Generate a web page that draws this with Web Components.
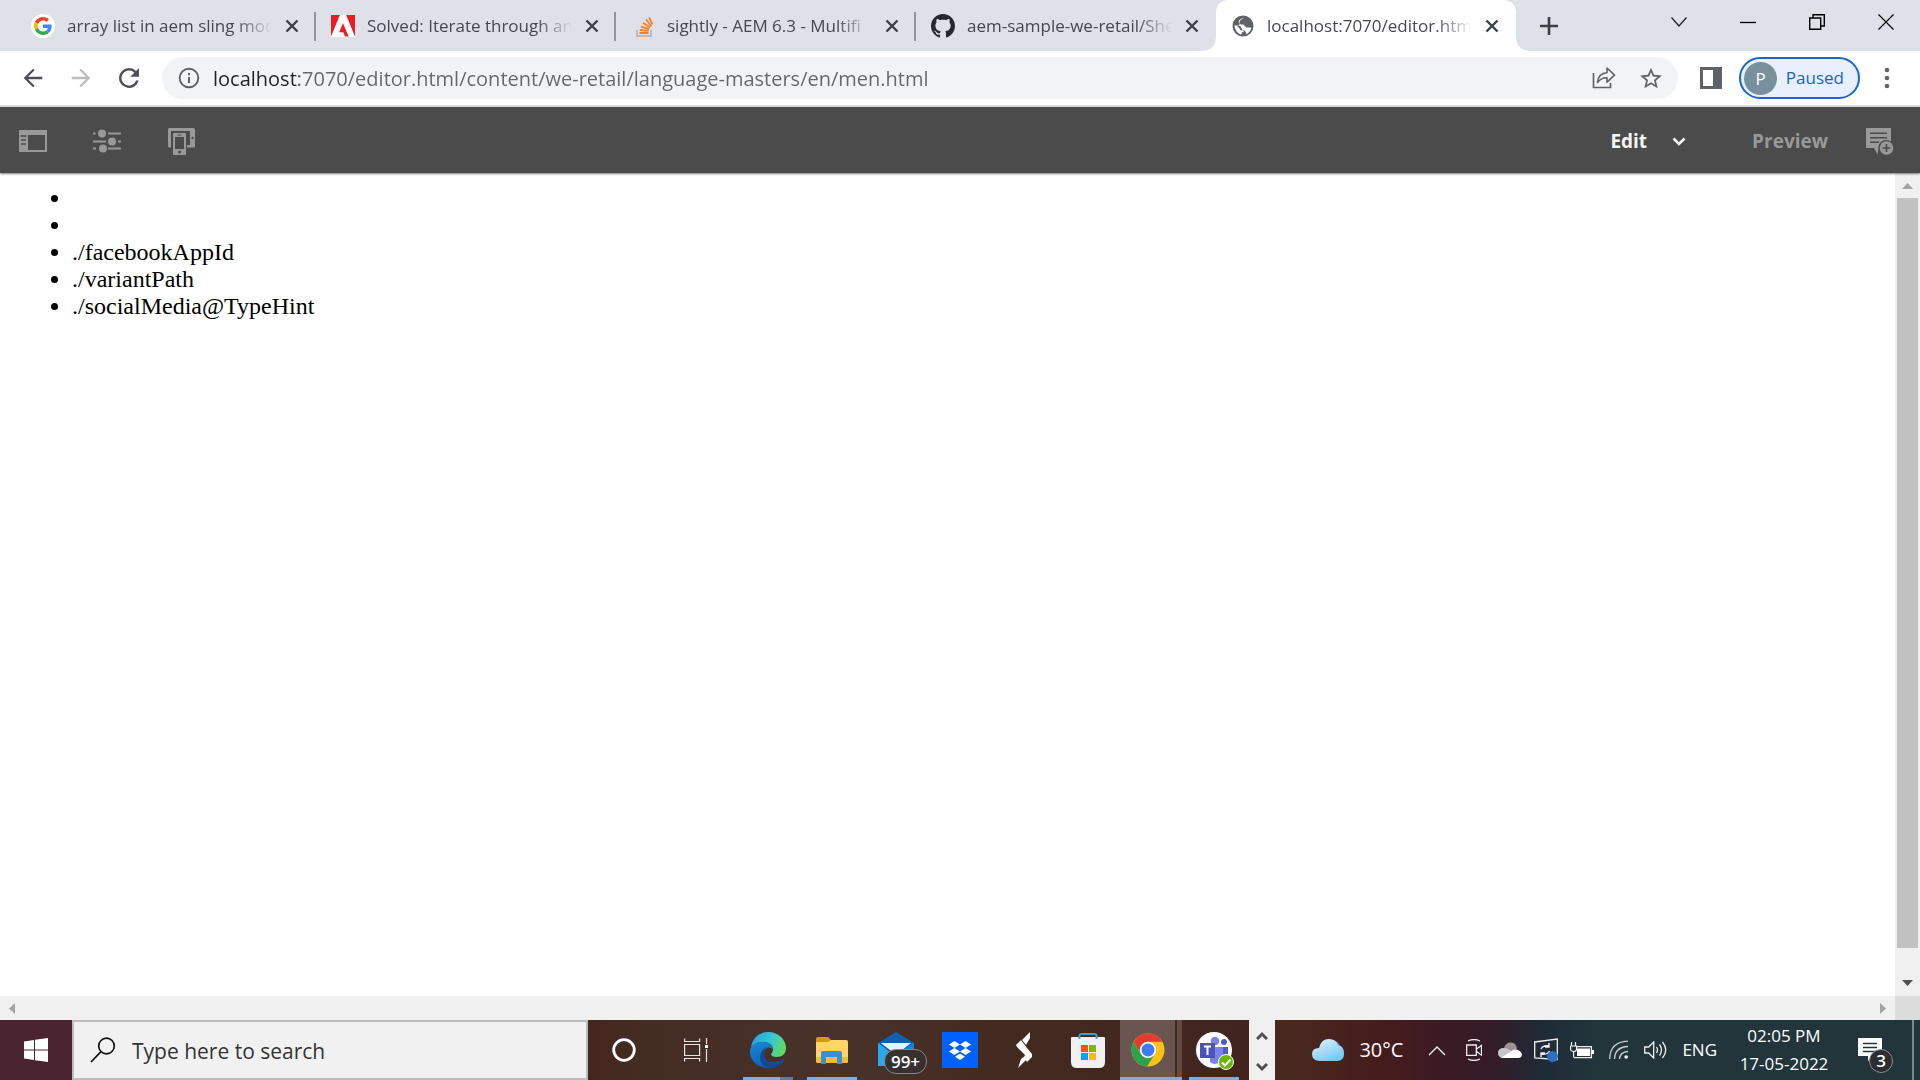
<!DOCTYPE html>
<html lang="en">
<head>
<meta charset="utf-8">
<title>localhost:7070/editor.html</title>
<style>
  html, body {
    height: 100%;
    margin: 0;
    overflow: hidden;
  }

  body {
    font-family: "Open Sans", "Noto Sans", sans-serif;
    background: #fff;
  }
</style>
</head>
<body>
<desktop-screen></desktop-screen>

<script>
// width, height, svg content
const ICONS = {
  google: [24, 24, `<circle cx="12" cy="12" r="12" fill="#fff"/><g transform="translate(3 3) scale(.375)">
    <path fill="#EA4335" d="M24 9.5c3.54 0 6.71 1.22 9.21 3.6l6.85-6.85C35.9 2.38 30.47 0 24 0 14.62 0 6.51 5.38 2.56 13.22l7.98 6.19C12.43 13.72 17.74 9.5 24 9.5z"/>
    <path fill="#4285F4" d="M46.98 24.55c0-1.57-.15-3.09-.38-4.55H24v9.02h12.94c-.58 2.96-2.26 5.48-4.78 7.18l7.73 6c4.51-4.18 7.09-10.36 7.09-17.65z"/>
    <path fill="#FBBC05" d="M10.53 28.59a14.5 14.5 0 010-9.18l-7.98-6.19a24 24 0 000 21.56l7.98-6.19z"/>
    <path fill="#34A853" d="M24 48c6.48 0 11.93-2.13 15.89-5.81l-7.73-6c-2.15 1.45-4.92 2.3-8.16 2.3-6.26 0-11.57-4.22-13.47-9.91l-7.98 6.19C6.51 42.62 14.62 48 24 48z"/></g>`],
  adobe: [24, 24, `<path fill="#fff" d="M0 1h24v22H0z"/><path fill="#ec1c24" d="M14 22.6l-1.7-4.3H8.1L12 9.2l5.7 13.4zM8.9 1H0v21.6zM24 1h-8.9L24 22.6z"/>`],
  stack: [24, 24, `<g transform="translate(2 0)"><path d="M4 16v6h14v-6" fill="none" stroke="#bcbbbb" stroke-width="2"/>
    <path d="M6.5 19h9M6.8 16l8.8.9M7.9 12.6l8.3 2.6M10 8.7l7.1 4.9M13 5.3l5.4 6.9M16.2 3.3l3.2 7" stroke="#f48024" stroke-width="1.8"/></g>`],
  github: [24, 24, `<path fill="#24292f" transform="scale(1.5)" d="M8 0C3.58 0 0 3.58 0 8c0 3.54 2.29 6.53 5.47 7.59.4.07.55-.17.55-.38 0-.19-.01-.82-.01-1.49-2.01.37-2.53-.49-2.69-.94-.09-.23-.48-.94-.82-1.13-.28-.15-.68-.52-.01-.53.63-.01 1.08.58 1.23.82.72 1.21 1.87.87 2.33.66.07-.52.28-.87.51-1.07-1.78-.2-3.64-.89-3.64-3.95 0-.87.31-1.59.82-2.15-.08-.2-.36-1.02.08-2.12 0 0 .67-.21 2.2.82.64-.18 1.32-.27 2-.27s1.36.09 2 .27c1.53-1.04 2.2-.82 2.2-.82.44 1.1.16 1.92.08 2.12.51.56.82 1.27.82 2.15 0 3.07-1.87 3.75-3.65 3.95.29.25.54.73.54 1.48 0 1.07-.01 1.93-.01 2.2 0 .21.15.46.55.38A8.013 8.013 0 0016 8c0-4.42-3.58-8-8-8z"/>`],
  globe: [24, 24, `<circle cx="12" cy="12" r="10.5" fill="#5f6368"/><path fill="#fff" d="M13 3.500c-1 1.500-4 2-4.500 4.500-.2 2 1 2.500 3 2.500 2.500 0 2 3 4.500 3h4.300c-.2 3-2.300 5.700-5.300 6.800.3-3-1-3.800-3.500-4-1.500-3.500-2-4.800-5-4.800H3.500c.1 4.800 3.500 8.500 7 9l.5-2.500 2 .2c-.5-2-2-2-4-2.200.3-2-2-2.500-3-4 2 0 2.500-.5 2.500-2.500-1.500-2-1.500-3.500 4.500-6z"/>`],
  close: [14, 14, `<path d="M1.500 1.500l11 11M12.500 1.500l-11 11" stroke="#3c4043" stroke-width="2.400"/>`],
  plus: [18, 18, `<path d="M9 0v18M0 9h18" stroke="#3c4043" stroke-width="2.600"/>`],
  caret: [18, 12, `<path d="M1.500 1.500L9 10l7.500-8.500" fill="none" stroke="#222" stroke-width="1.300"/>`],
  minimize: [16, 16, `<path d="M0 8.500h16" stroke="#000" stroke-width="1.300"/>`],
  restore: [16, 16, `<path d="M.7 4h11v11.300H.7zM4 4V.7h11.300V12h-3.600" fill="none" stroke="#000" stroke-width="1.400"/>`],
  quit: [16, 16, `<path d="M.5.5l15 15M15.500.5l-15 15" stroke="#000" stroke-width="1.200"/>`],
  back: [28, 28, `<path transform="scale(1.167)" fill="#4d5156" d="M20 11H7.800l5.600-5.600L12 4l-8 8 8 8 1.400-1.400L7.800 13H20z"/>`],
  forward: [28, 28, `<path transform="scale(1.167)" fill="#bbbdc0" d="M4 11h12.200l-5.600-5.600L12 4l8 8-8 8-1.400-1.400 5.600-5.600H4z"/>`],
  reload: [30, 30, `<path transform="scale(1.25)" fill="#4d5156" d="M17.650 6.350A7.960 7.960 0 0012 4a8 8 0 107.730 10h-2.080A6 6 0 1112 6c1.660 0 3.140.69 4.220 1.780L13 11h7V4z"/>`],
  info: [22, 22, `<circle cx="11" cy="11" r="9.300" fill="none" stroke="#5f6368" stroke-width="1.900"/><path d="M11 10v6M11 6v2.200" stroke="#5f6368" stroke-width="2"/>`],
  share: [24, 24, `<path d="M1.500 7v14.500h17V17" fill="none" stroke="#5f6368" stroke-width="1.700"/><path d="M5.500 16.500c.5-6 3.500-9.500 9.500-9.800V2l7.500 7.200-7.500 7v-4.500c-4.500 0-7 1.300-9.500 4.800z" fill="none" stroke="#5f6368" stroke-width="1.600" stroke-linejoin="round"/>`],
  star: [24, 24, `<path transform="translate(-1 -.5) scale(1.083)" fill="#5f6368" d="M22 9.240l-7.190-.62L12 2 9.190 8.630 2 9.240l5.460 4.730L5.820 21 12 17.270 18.180 21l-1.630-7.030zM12 15.400l-3.760 2.270 1-4.280-3.320-2.880 4.380-.38L12 6.100l1.710 4.040 4.380.38-3.320 2.880 1 4.280z"/>`],
  panel: [22, 22, `<path fill="#5f6368" fill-rule="evenodd" d="M0 0h22v22H0zM3 3v16h10V3z"/>`],
  dots: [6, 22, `<g fill="#5f6368"><circle cx="3" cy="3" r="2.300"/><circle cx="3" cy="11" r="2.300"/><circle cx="3" cy="19" r="2.300"/></g>`],
  rail: [28, 22, `<path fill="#999" fill-rule="evenodd" d="M0 0h28v22H0zM9 5v15h17V5zM1.500 5.200v1.500h6V5.200zM2 9.200v1.500h5V9.200zM2 13.200v1.500h5v-1.500z"/>`],
  sliders: [28, 24, `<g stroke="#999" stroke-width="2"><path d="M0 4.500h2.500M15 4.500h13M0 12.500h13M25 12.500h3M0 19.500h3M15 19.500h13"/></g><g fill="#999"><circle cx="9" cy="4.500" r="4"/><circle cx="19" cy="12.500" r="4"/><circle cx="10" cy="19.500" r="4"/></g>`],
  devices: [27, 27, `<path fill="#999" fill-rule="evenodd" d="M1.500 0h24q1.500 0 1.500 1.500V18q0 1.500-1.500 1.500H19V17h3V3H3v16.500H1.500Q0 19.500 0 18V1.500Q0 0 1.500 0z"/><circle cx="24.500" cy="10" r="1.200" fill="#4b4b4b"/><path fill="#999" fill-rule="evenodd" d="M6 5h11q1 0 1 1v20q0 1-1 1H6q-1 0-1-1V6q0-1 1-1zM7 9v12h9V9zM9.500 6.500v1h4v-1zM11.500 22.500a1.300 1.300 0 100 3 1.300 1.300 0 000-3z"/>`],
  chevron: [14, 9, `<path d="M1.500 1.500L7 7l5.500-5.500" fill="none" stroke="#f5f5f5" stroke-width="2.600"/>`],
  annotate: [28, 28, `<path fill="#999" fill-rule="evenodd" d="M0 1h25v13.500a8 8 0 00-12.500 8l-1 5L8 21H0zM4 5.500V7h17V5.500zM4 10v1.500h17V10zM4 14.500V16h9v-1.500z"/><circle cx="20.500" cy="21" r="6.800" fill="#999"/><path d="M20.500 17v8M16.500 21h8" stroke="#4b4b4b" stroke-width="1.600"/>`],
  windows: [24, 24, `<path fill="#fff" d="M0 3.400l10-1.400v9.500H0zM11 1.800L24 0v11.500H11zM0 12.500h10V22L0 20.600zM11 12.500h13V24l-13-1.800z"/>`],
  search: [26, 26, `<circle cx="16.500" cy="9" r="7.800" fill="none" stroke="#111" stroke-width="1.700"/><path d="M11 14.700L1 25" stroke="#111" stroke-width="1.700"/>`],
  cortana: [24, 24, `<circle cx="12" cy="12" r="10.300" fill="none" stroke="#fff" stroke-width="2.800"/>`],
  taskview: [24, 24, `<g fill="none" stroke="#e8e4e2" stroke-width="1.200"><path d="M.6.5v3h15v-3M.6 6.500h15v11H.6zM.6 23.500v-3h15v3M22.500 0v6M22.500 11v13"/></g><path d="M21 7h3v3h-3z" fill="#fff"/>`],
  edge: [36, 36, `<defs><linearGradient id="a" x1="0" x2="1" y1=".2" y2=".5"><stop stop-color="#2b9be0"/><stop offset=".55" stop-color="#35c7d4"/><stop offset="1" stop-color="#62dc5b"/></linearGradient><linearGradient id="b" y2="1" x2=".5"><stop stop-color="#178bd8"/><stop offset="1" stop-color="#0f5cb5"/></linearGradient></defs>
    <path fill="url(#a)" d="M1 16C2 6 9 0 18 0c11 0 18 8 18 16 0 6-4 9-9 9-4 0-6-1.500-6-2.500s2-2 2-5.500c0-4-4-7-10-7-5 0-10 2-12 6z"/>
    <path fill="url(#b)" d="M0 20c0-6 5-10 12-10 7 0 11 3.500 11 7.500-3-4-9-2-9 4.500 0 7 6 9.500 12 8 4-.8 6-2.500 7-2.500 1 0 1 1 .5 1.700C30 33.500 24.500 36 18 36 8 36 0 28.500 0 20z"/>
    <path fill="#114a94" d="M17 15c-5 2-8 7-6.500 13 1.200 5 5 8 9.500 8 6 0 11-3 13.500-6.800.5-.7.5-1.700-.5-1.700-1 0-3 1.700-7 2.500-6 1.500-12-1-12-8 0-3.500 1-5.500 3-7z"/>`],
  explorer: [32, 27, `<path fill="#d99a08" d="M0 2q0-2 2-2h10l3 3v5H0z"/><path fill="#ffd667" d="M0 5h12l3-2h15q2 0 2 2v19q0 2-2 2H2q-2 0-2-2z"/><path fill="#f3bd38" d="M0 20h32v4q0 2-2 2H2q-2 0-2-2z"/><path fill="#3c8fd6" d="M5 27V16q0-2 2-2h17q2 0 2 2v11h-5v-7H10v7z"/>`],
  mail: [36, 36, `<path fill="#0f61b0" d="M0 11L18 0l18 11v6H0z"/><path fill="#2aa8ea" d="M0 11l18 13 18-13v23H0z"/><path fill="#e9f2fa" d="M3 11h30L18 23z"/><path fill="#1b82d1" d="M36 11v23L14 20l4 3z"/>`],
  dropbox: [36, 36, `<path fill="#0061fe" d="M0 0h36v36H0z"/><path fill="#fff" d="M12.500 9L18 12.500 12.500 16 7 12.500zM23.500 9L29 12.500 23.500 16 18 12.500zM12.500 16L18 19.500 12.500 23 7 19.500zM23.500 16L29 19.500 23.500 23 18 19.500zM18 21.500l5 3.200-5 3.300-5-3.300z"/>`],
  spark: [18, 36, `<path fill="#fff" d="M15 0v6l-4 7-4-5zM1 13l5-5 6 8 5 6v3l-5 5-3-5 1-2-8-8zM3 36l3-9 4-3 1 4z"/>`],
  store: [36, 36, `<path fill="#f1f1f1" d="M1 6q0-1 1-1h32q1 0 1 1v24q0 6-6 6H7q-6 0-6-6z"/><path fill="#f05022" d="M11 13h7v7h-7z"/><path fill="#7eb900" d="M19 13h7v7h-7z"/><path fill="#00a3ee" d="M11 21h7v7h-7z"/><path fill="#ffb800" d="M19 21h7v7h-7z"/><path d="M9.500 7V4q0-2 2-2h13q2 0 2 2v3" fill="none" stroke="#35a3cf" stroke-width="2"/>`],
  chrome: [34, 34, `<circle cx="17" cy="17" r="16.500" fill="#fbc116"/><path fill="#e33b2e" d="M2.700 8.800A16.500 16.500 0 0131.300 8.800H17L10 21z"/><path fill="#2ba24c" d="M2.700 8.800L10 21.200 17 25.300 24 21 16 33.500A16.500 16.500 0 012.700 8.800z"/><circle cx="17" cy="17" r="8.200" fill="#fff"/><circle cx="17" cy="17" r="6.500" fill="#3b7ded"/>`],
  teams: [36, 36, `<circle cx="18" cy="18" r="18" fill="#fff"/><circle cx="28" cy="10" r="3" fill="#5059c9"/><path fill="#5059c9" d="M25 15h7v9q0 4-4 4h-3z"/><circle cx="19" cy="9" r="4.300" fill="#7b83eb"/><path fill="#7b83eb" d="M14 15h13v10a8 8 0 01-13 5z"/><path fill="#4b53bc" d="M4 11h15v15H4z"/><path d="M8 14.500h7M11.500 14.500V23" stroke="#fff" stroke-width="2"/>`],
  presence: [16, 16, `<circle cx="8" cy="8" r="7.500" fill="#6bb700" stroke="#fff"/><path d="M4 8.500l3 3 5.500-6" fill="none" stroke="#fff" stroke-width="2"/>`],
  bandUp: [12, 9, `<path d="M1 8l5-5 5 5" fill="none" stroke="#505050" stroke-width="3"/>`],
  bandDown: [12, 9, `<path d="M1 1l5 5 5-5" fill="none" stroke="#505050" stroke-width="3"/>`],
  weather: [32, 23, `<defs><linearGradient id="a" x2=".6" y2="1"><stop stop-color="#e5f6fe"/><stop offset="1" stop-color="#79c6f2"/></linearGradient></defs><path fill="#3b85c9" d="M18 3q8-3 10 4 4 2 4 7l-6 4z"/><path fill="url(#a)" d="M7 9Q9 0 17 0q7 0 9 6 6 1 6 9 0 7-7 7H8q-8 0-8-7 0-6 7-6z"/>`],
  trayUp: [18, 11, `<path d="M1 10l8-8 8 8" fill="none" stroke="#eee" stroke-width="1.400"/>`],
  meet: [16, 22, `<g fill="none" stroke="#eee" stroke-width="1.300"><path d="M.7 6h9.600v10.300H.7zM10.500 10l5-3.500v9.500l-5-3.500M2 2q6-3 12 0M2 20q6 3 12 0"/></g>`],
  onedrive: [24, 17, `<path fill="#9b9296" d="M6 6q2-6 7-5.500 5 0 6 6l-7 7-9-3z"/><path fill="#c9c5c8" d="M4 16q-4-1-4-5 0-5 6-5 4 0 8 4l-9 6z"/><path fill="#fff" d="M3 16l12-8q6-2 9 4 0 4-4 4z"/>`],
  sync: [24, 24, `<path d="M.7 4L23.300 1v20.500L.7 20z" fill="none" stroke="#eee" stroke-width="1.300"/><path d="M7 11q2-4 8-3M15 5v4h-4M15.500 13q-2 4-8 3M7 19v-4h4" fill="none" stroke="#eee" stroke-width="1.400"/><circle cx="18.500" cy="18.500" r="5.500" fill="#2a72c4"/>`],
  battery: [24, 17, `<path d="M7 4.600h14.400v11H4" fill="none" stroke="#eee" stroke-width="1.300"/><path fill="#fff" d="M7 6.500h13v7.500H7zM22 8h2v4h-2z"/><path d="M1.500 0v4M5.500 0v4M.6 4h6v3q0 2.500-3 2.500T.6 7zM3.600 10v5.600" fill="none" stroke="#eee" stroke-width="1.200"/>`],
  wifi: [20, 20, `<g fill="none" stroke="#c8cecf" stroke-width="1.300"><path d="M.7 19Q1 2 19 1.200M5.500 19Q6 7 19 6.500M10.500 19q.5-7 8.500-7.500"/></g><circle cx="17.200" cy="17" r="1.800" fill="#fff"/>`],
  volume: [23, 18, `<g fill="none" stroke="#eee" stroke-width="1.300"><path d="M.7 6h4l5-5v16l-5-5h-4zM12.500 6q2 3 0 6M15.500 3.500q4 5.500 0 11M18.500 1q6.500 8 0 16"/></g>`],
  action: [24, 24, `<path fill="#fff" d="M0 0h24v18h-9l-5 5v-5H0z"/><path d="M5 5.500h14M5 9.500h14M5 13.500h14" stroke="#21353a" stroke-width="1.300"/>`],
  up: [11, 6, `<path fill="#a3a3a3" d="M0 6l5.500-6L11 6z"/>`],
  down: [11, 6, `<path fill="#505050" d="M0 0h11L5.500 6z"/>`],
  left: [6, 11, `<path fill="#a3a3a3" d="M6 0v11L0 5.500z"/>`],
  right: [6, 11, `<path fill="#a3a3a3" d="M0 0v11l6-5.500z"/>`]
};

const BUTTON_RESET = `
  button {
    display: grid;
    place-content: center;
    margin: 0;
    padding: 0;
    border: none;
    background: none;
    color: inherit;
    font: inherit;
  }
`;

class SvgIcon extends HTMLElement {
  static observedAttributes = ['name'];

  constructor() {
    super();
    this.attachShadow({ mode: 'open' });
  }

  attributeChangedCallback() {
    const [width, height, content] = ICONS[this.getAttribute('name')];
    this.shadowRoot.innerHTML = `
      <style>
        :host { display: block; flex: none; }
        svg { display: block; }
      </style>
      <svg width="${width}" height="${height}" viewBox="0 0 ${width} ${height}" aria-hidden="true">${content}</svg>
    `;
  }
}

class BrowserTab extends HTMLElement {
  constructor() {
    super();
    this.attachShadow({ mode: 'open' });
    this.shadowRoot.innerHTML = `
      <style>
        ${BUTTON_RESET}
        :host {
          display: flex;
          align-items: center;
          flex: 0 1 300px;
          box-sizing: border-box;
          min-width: 0;
          height: 51px;
          padding: 0 16px 0 15px;
          gap: 12px;
          position: relative;
          font-size: 17px;
          line-height: 24px;
          color: #45494d;
        }
        :host([divided])::after {
          content: "";
          position: absolute;
          right: 0;
          top: 12px;
          width: 2px;
          height: 29px;
          background: #919499;
        }
        :host([active]) {
          background: #fff;
          border-radius: 12px 12px 0 0;
        }
        /* flared feet of the active tab */
        :host([active])::before, :host([active])::after {
          content: "";
          position: absolute;
          bottom: 0;
          width: 12px;
          height: 12px;
        }
        :host([active])::before {
          right: 100%;
          background: radial-gradient(circle at 0 0, transparent 11px, #fff 12px);
        }
        :host([active])::after {
          left: 100%;
          background: radial-gradient(circle at 100% 0, transparent 11px, #fff 12px);
        }
        .title {
          flex: 1;
          overflow: hidden;
          white-space: nowrap;
          -webkit-mask-image: linear-gradient(to left, transparent, #000 36px);
          mask-image: linear-gradient(to left, transparent, #000 36px);
        }
        .close { width: 16px; height: 24px; }
      </style>
      <svg-icon></svg-icon>
      <span class="title"><slot></slot></span>
      <button class="close" aria-label="Close tab"><svg-icon name="close"></svg-icon></button>
    `;
    this.shadowRoot.querySelector('svg-icon').setAttribute('name', this.getAttribute('icon'));
  }
}

class TabStrip extends HTMLElement {
  constructor() {
    super();
    this.attachShadow({ mode: 'open' });
    this.shadowRoot.innerHTML = `
      <style>
        ${BUTTON_RESET}
        :host {
          display: flex;
          padding-left: 16px;
          background: #dee1e8;
        }
        .new { width: 66px; }
        .controls {
          display: flex;
          margin-left: auto;
          height: 43px;
        }
        .controls button { width: 69px; }
      </style>
      <browser-tab icon="google" divided>array list in aem sling mod</browser-tab>
      <browser-tab icon="adobe" divided>Solved: Iterate through an</browser-tab>
      <browser-tab icon="stack" divided>sightly - AEM 6.3 - Multifi</browser-tab>
      <browser-tab icon="github">aem-sample-we-retail/She</browser-tab>
      <browser-tab icon="globe" active>localhost:7070/editor.html</browser-tab>
      <button class="new" aria-label="New tab"><svg-icon name="plus"></svg-icon></button>
      <div class="controls">
        <button aria-label="Search tabs"><svg-icon name="caret"></svg-icon></button>
        <button aria-label="Minimize"><svg-icon name="minimize"></svg-icon></button>
        <button aria-label="Restore"><svg-icon name="restore"></svg-icon></button>
        <button aria-label="Close"><svg-icon name="quit"></svg-icon></button>
      </div>
    `;
  }
}

class AddressBar extends HTMLElement {
  constructor() {
    super();
    this.attachShadow({ mode: 'open' });
    this.shadowRoot.innerHTML = `
      <style>
        ${BUTTON_RESET}
        :host {
          display: flex;
          align-items: center;
          height: 54px;
          padding: 0 21px 0 9px;
          background: #fff;
          border-bottom: 2px solid #dcdcdc;
        }
        .nav { width: 48px; height: 42px; }
        .omnibox {
          display: flex;
          align-items: center;
          flex: 1;
          height: 42px;
          margin: 0 12px 0 9px;
          padding: 0 4px 0 16px;
          gap: 13px;
          border-radius: 21px;
          background: #f1f3f4;
        }
        /* host name is darker than the rest of the address */
        input {
          flex: 1;
          min-width: 0;
          height: 32px;
          padding: 2px 0 0;
          border: none;
          outline: none;
          font: 20px/32px "Open Sans", "Noto Sans", sans-serif;
          color: #63676b;
          background: linear-gradient(to right, #202124 86px, #63676b 86px);
          -webkit-background-clip: text;
          background-clip: text;
          -webkit-text-fill-color: transparent;
        }
        .actions { display: flex; }
        .actions button { width: 47px; height: 42px; }
        .side { width: 42px; height: 42px; }
        .profile {
          display: flex;
          align-items: center;
          justify-content: space-between;
          box-sizing: border-box;
          width: 121px;
          height: 42px;
          margin: 0 15px 0 7px;
          padding: 0 14px 0 3px;
          border: 2px solid #1b66c9;
          border-radius: 21px;
          background: #e8f0fd;
          color: #1b62c4;
          font-size: 17px;
          line-height: 24px;
        }
        .avatar {
          width: 33px;
          height: 33px;
          border-radius: 50%;
          background: #78909c;
          color: #fff;
          line-height: 33px;
          text-align: center;
        }
        .menu { width: 24px; height: 42px; }
      </style>
      <button class="nav" aria-label="Back"><svg-icon name="back"></svg-icon></button>
      <button class="nav" aria-label="Forward"><svg-icon name="forward"></svg-icon></button>
      <button class="nav" aria-label="Reload"><svg-icon name="reload"></svg-icon></button>
      <div class="omnibox">
        <svg-icon name="info"></svg-icon>
        <input type="text" aria-label="Address" spellcheck="false" value="localhost:7070/editor.html/content/we-retail/language-masters/en/men.html">
        <div class="actions">
          <button aria-label="Share"><svg-icon name="share"></svg-icon></button>
          <button aria-label="Bookmark"><svg-icon name="star"></svg-icon></button>
        </div>
      </div>
      <button class="side" aria-label="Side panel"><svg-icon name="panel"></svg-icon></button>
      <button class="profile"><span class="avatar">P</span><span>Paused</span></button>
      <button class="menu" aria-label="Menu"><svg-icon name="dots"></svg-icon></button>
    `;
  }
}

class EditorToolbar extends HTMLElement {
  constructor() {
    super();
    this.attachShadow({ mode: 'open' });
    this.shadowRoot.innerHTML = `
      <style>
        ${BUTTON_RESET}
        :host {
          display: flex;
          align-items: center;
          height: 64px;
          padding-top: 2px;
          position: relative;
          background: #4b4b4b;
          box-shadow: 0 1px 2px rgba(0, 0, 0, .5);
          font-size: 19px;
          font-weight: 700;
          color: #999;
        }
        .tool { width: 74px; height: 64px; }
        .tool:first-of-type { width: 70px; padding-right: 4px; }
        .mode {
          display: flex;
          align-items: center;
          margin-left: auto;
          gap: 25px;
          color: #f5f5f5;
        }
        .preview { margin: 0 38px 0 66px; }
        .annotate { width: 54px; height: 64px; padding-right: 26px; }
      </style>
      <button class="tool" aria-label="Toggle side panel"><svg-icon name="rail"></svg-icon></button>
      <button class="tool" aria-label="Page information"><svg-icon name="sliders"></svg-icon></button>
      <button class="tool" aria-label="Emulator"><svg-icon name="devices"></svg-icon></button>
      <button class="mode">Edit<svg-icon name="chevron"></svg-icon></button>
      <button class="preview">Preview</button>
      <button class="annotate" aria-label="Annotate"><svg-icon name="annotate"></svg-icon></button>
    `;
  }
}

class ScrollTrack extends HTMLElement {
  constructor() {
    super();
    this.attachShadow({ mode: 'open' });
    this.shadowRoot.innerHTML = `
      <style>
        :host {
          display: flex;
          flex-direction: column;
          align-items: center;
          justify-content: space-between;
          background: #f0f0f0;
        }
        :host([horizontal]) {
          flex-direction: row;
          padding: 0 9px;
        }
        :host(:not([horizontal])) { padding: 10px 0; }
        .thumb {
          flex: 1;
          width: 21px;
          margin: 9px 0 32px;
          background: #c1c1c1;
        }
        :host([horizontal]) .thumb { display: none; }
      </style>
      <slot name="start"></slot>
      <div class="thumb"></div>
      <slot name="end"></slot>
    `;
  }
}

class PageFrame extends HTMLElement {
  constructor() {
    super();
    this.attachShadow({ mode: 'open' });
    this.shadowRoot.innerHTML = `
      <style>
        :host {
          display: grid;
          grid-template: 1fr 24px / 1fr 25px;
          background: #fff;
        }
        ul {
          margin: 0;
          padding: 12px 12px 12px 72px;
          font: 24px/27px "Liberation Serif", serif;
          color: #000;
        }
        li { min-height: 27px; }
        .corner { background: #dcdcdc; }
      </style>
      <ul>
        <li></li>
        <li></li>
        <li>./facebookAppId</li>
        <li>./variantPath</li>
        <li>./socialMedia@TypeHint</li>
      </ul>
      <scroll-track>
        <svg-icon slot="start" name="up"></svg-icon>
        <svg-icon slot="end" name="down"></svg-icon>
      </scroll-track>
      <scroll-track horizontal>
        <svg-icon slot="start" name="left"></svg-icon>
        <svg-icon slot="end" name="right"></svg-icon>
      </scroll-track>
      <div class="corner"></div>
    `;
  }
}

class TaskButton extends HTMLElement {
  constructor() {
    super();
    this.attachShadow({ mode: 'open' });
    this.shadowRoot.innerHTML = `
      <style>
        ${BUTTON_RESET}
        :host {
          display: block;
          flex: none;
          width: 64px;
          height: 60px;
        }
        :host([wide]) { width: 72px; }
        button {
          width: 100%;
          height: 100%;
          position: relative;
        }
        :host([running]) button::after {
          content: "";
          position: absolute;
          left: 7px;
          right: 7px;
          bottom: 0;
          height: 3px;
          background: #76b0e0;
        }
        :host([stacked]) button::after {
          background: linear-gradient(to left, #5580a6 13px, #76b0e0 13px);
        }
        :host([focused]) { width: 62px; }
        :host([focused]) button {
          padding-right: 6px;
          background: linear-gradient(to left, #604c45 5px, #3b2923 5px 7px, #6a5650 7px);
        }
        :host([focused]) button::after { left: 0; right: 0; }
        ::slotted(*) { position: absolute; }
      </style>
      <button><svg-icon></svg-icon><slot></slot></button>
    `;
    this.shadowRoot.querySelector('button').setAttribute('aria-label', this.getAttribute('label'));
    this.shadowRoot.querySelector('svg-icon').setAttribute('name', this.getAttribute('icon'));
  }
}

class SystemTray extends HTMLElement {
  constructor() {
    super();
    this.attachShadow({ mode: 'open' });
    this.shadowRoot.innerHTML = `
      <style>
        ${BUTTON_RESET}
        :host {
          display: flex;
          align-items: center;
          height: 60px;
          background: linear-gradient(to right, #4a2a20, #461d1c 100px, #3b1a25 170px, #331c26 220px, #1f2a36 265px, #21353a 320px);
          color: #fff;
          font-size: 17px;
          line-height: 28px;
        }
        .weather {
          display: flex;
          align-items: center;
          justify-content: flex-start;
          gap: 15px;
          width: 149px;
          padding-left: 37px;
          font-size: 20px;
        }
        .icons {
          display: grid;
          grid-template-columns: 26px 24px 24px 24px 24px 26px 22px;
          gap: 12px;
          align-items: center;
          justify-items: center;
        }
        .lang { margin-left: 16px; }
        .clock {
          width: 100px;
          margin-left: 17px;
          text-align: center;
        }
        .action {
          position: relative;
          width: 68px;
          height: 60px;
          padding-right: 16px;
          margin-left: 10px;
        }
        .count {
          position: absolute;
          left: 25px;
          top: 29px;
          box-sizing: border-box;
          width: 24px;
          height: 24px;
          border: 1px solid #8b8f92;
          border-radius: 50%;
          background: #2b2d33;
          font-weight: 600;
          line-height: 22px;
        }
        .peek {
          width: 6px;
          height: 60px;
          border-left: 2px solid #7b898d;
        }
      </style>
      <button class="weather"><svg-icon name="weather"></svg-icon>30°C</button>
      <div class="icons">
        <svg-icon name="trayUp"></svg-icon>
        <svg-icon name="meet"></svg-icon>
        <svg-icon name="onedrive"></svg-icon>
        <svg-icon name="sync"></svg-icon>
        <svg-icon name="battery"></svg-icon>
        <svg-icon name="wifi"></svg-icon>
        <svg-icon name="volume"></svg-icon>
      </div>
      <button class="lang">ENG</button>
      <button class="clock"><span>02:05 PM</span><span>17-05-2022</span></button>
      <button class="action" aria-label="Notifications"><svg-icon name="action"></svg-icon><span class="count">3</span></button>
      <div class="peek"></div>
    `;
  }
}

class TaskBar extends HTMLElement {
  constructor() {
    super();
    this.attachShadow({ mode: 'open' });
    this.shadowRoot.innerHTML = `
      <style>
        ${BUTTON_RESET}
        :host {
          display: flex;
          height: 60px;
          background: #4a2330;
        }
        .search {
          display: flex;
          align-items: center;
          box-sizing: border-box;
          width: 516px;
          height: 60px;
          padding-left: 16px;
          gap: 16px;
          border: 2px solid #bdbdbd;
          background: #f1f1f1;
        }
        input {
          flex: 1;
          min-width: 0;
          padding: 2px 0 0;
          border: none;
          outline: none;
          background: none;
          font: 21px/32px "Open Sans", "Noto Sans", sans-serif;
        }
        input::placeholder { color: #333; opacity: 1; }
        .apps {
          display: flex;
          flex: 1;
          min-width: 0;
          background: linear-gradient(to right, #45251f, #432c22 50px, #48322a 250px, #432a20 420px, #42241f);
        }
        .apps task-button:nth-child(3) { margin-left: 4px; }
        .badge {
          left: 20px;
          top: 29px;
          box-sizing: border-box;
          width: 43px;
          height: 25px;
          border: 1px solid #8c8583;
          border-radius: 12px;
          background: #36302e;
          color: #fff;
          font-size: 17px;
          font-weight: 600;
          line-height: 23px;
          text-align: center;
        }
        .presence { left: 36px; top: 34px; }
        .band {
          display: flex;
          flex-direction: column;
          justify-content: space-between;
          box-sizing: border-box;
          width: 26px;
          padding: 9px 0 7px;
          background: #f0f0f0;
        }
        .band button { height: 12px; }
      </style>
      <task-button wide icon="windows" label="Start"></task-button>
      <label class="search">
        <svg-icon name="search"></svg-icon>
        <input type="text" placeholder="Type here to search" aria-label="Type here to search">
      </label>
      <div class="apps">
        <task-button wide icon="cortana" label="Cortana"></task-button>
        <task-button wide icon="taskview" label="Task view"></task-button>
        <task-button running stacked icon="edge" label="Edge"></task-button>
        <task-button running icon="explorer" label="File Explorer"></task-button>
        <task-button icon="mail" label="Mail"><span class="badge">99+</span></task-button>
        <task-button icon="dropbox" label="Dropbox"></task-button>
        <task-button icon="spark" label="Swift"></task-button>
        <task-button icon="store" label="Store"></task-button>
        <task-button running focused icon="chrome" label="Chrome"></task-button>
        <task-button running icon="teams" label="Teams"><svg-icon class="presence" name="presence"></svg-icon></task-button>
      </div>
      <div class="band">
        <button aria-label="Scroll up"><svg-icon name="bandUp"></svg-icon></button>
        <button aria-label="Scroll down"><svg-icon name="bandDown"></svg-icon></button>
      </div>
      <system-tray></system-tray>
    `;
  }
}

class DesktopScreen extends HTMLElement {
  constructor() {
    super();
    this.attachShadow({ mode: 'open' });
    this.shadowRoot.innerHTML = `
      <style>
        :host {
          display: flex;
          flex-direction: column;
          height: 100vh;
        }
        page-frame { flex: 1; min-height: 0; }
      </style>
      <tab-strip></tab-strip>
      <address-bar></address-bar>
      <editor-toolbar></editor-toolbar>
      <page-frame></page-frame>
      <task-bar></task-bar>
    `;
  }
}

customElements.define('svg-icon', SvgIcon);
customElements.define('browser-tab', BrowserTab);
customElements.define('tab-strip', TabStrip);
customElements.define('address-bar', AddressBar);
customElements.define('editor-toolbar', EditorToolbar);
customElements.define('scroll-track', ScrollTrack);
customElements.define('page-frame', PageFrame);
customElements.define('task-button', TaskButton);
customElements.define('system-tray', SystemTray);
customElements.define('task-bar', TaskBar);
customElements.define('desktop-screen', DesktopScreen);
</script>
</body>
</html>
